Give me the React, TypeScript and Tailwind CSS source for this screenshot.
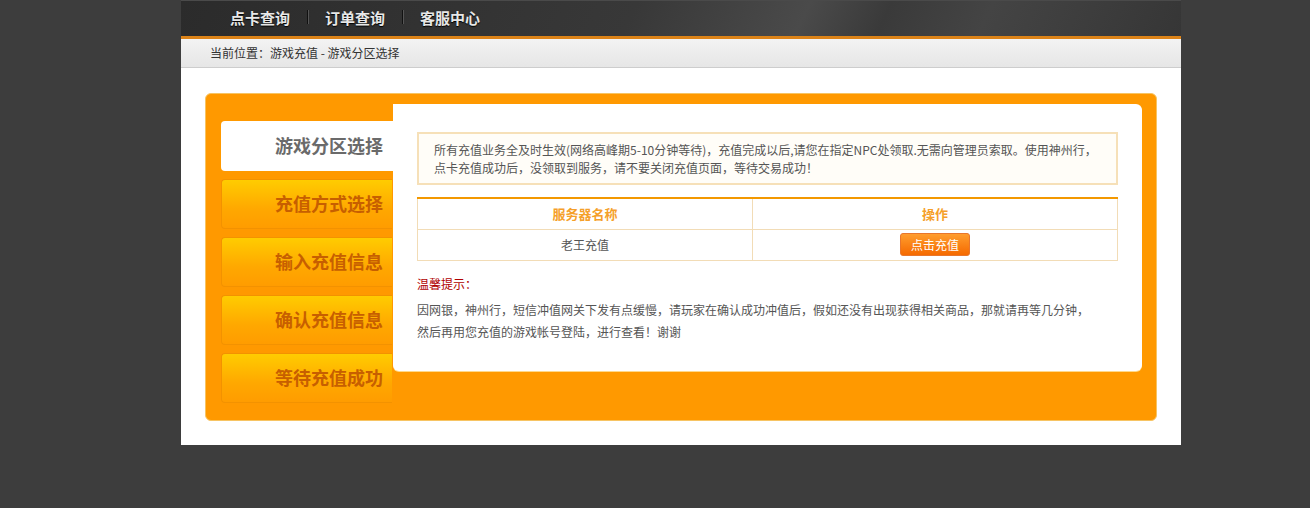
const NAV_LINKS = ["点卡查询", "订单查询", "客服中心"]
const STEPS = ["游戏分区选择", "充值方式选择", "输入充值信息", "确认充值信息", "等待充值成功"]

const FONT = "font-['Microsoft_YaHei','Noto_Sans_CJK_SC',sans-serif]"

export default function App() {
  return (
    <div className={`min-h-[508px] bg-[#3d3d3d] ${FONT}`}>
      <div className="ml-[181px] w-[1000px]">
        {/* Top nav */}
        <div className="h-[36px] bg-[linear-gradient(115deg,#2b2b2b_0%,#383838_45%,#4a4a4a_62%,#3a3a3a_70%,#444444_80%,#363636_100%)] shadow-[inset_0_1px_0_#4a4a4a]">
          <div className="flex items-center h-full pl-[49px] pb-[2px]">
            {NAV_LINKS.map((link, i) => (
              <div key={link} className="flex items-center">
                {i > 0 && <span className="mx-[17px] h-[14px] w-px bg-[#111] shadow-[1px_0_0_#555]" />}
                <a href="#" className="text-[15px] font-bold text-[#e8e8e8] leading-none [text-shadow:0_1px_1px_#000]">
                  {link}
                </a>
              </div>
            ))}
          </div>
        </div>
        <div className="h-[3px] bg-[#dc8318]" />

        {/* Breadcrumb */}
        <div className="h-[29px] flex items-center pl-[29px] text-[12px] text-[#333] bg-[linear-gradient(#f3f3f3,#e6e6e6)] border-b border-[#cdcdcd]">
          当前位置：游戏充值 - 游戏分区选择
        </div>

        {/* Main */}
        <div className="bg-white pt-[25px] pb-[24px] px-[24px]">
          <div className="h-[328px] rounded-[6px] bg-[#ff9900] border border-[#f7c463] flex pl-[15px] pt-[10px]">
            {/* Steps */}
            <div className="w-[172px] pt-[17px] flex flex-col gap-[8px]">
              {STEPS.map((step, i) =>
                i === 0 ? (
                  <div
                    key={step}
                    className="h-[50px] bg-white rounded-l-[4px] flex items-center justify-end pr-[10px] pb-[2px] text-[18px] font-bold text-[#6a6a6a]"
                  >
                    {step}
                  </div>
                ) : (
                  <div
                    key={step}
                    className="h-[50px] mr-px rounded-l-[4px] border border-r-0 border-[#f39200] bg-[linear-gradient(#ffcc00,#ffa800_60%,#ff9c00)] flex items-center justify-end pr-[9px] pb-[2px] text-[18px] font-bold text-[#c75f00]"
                  >
                    {step}
                  </div>
                )
              )}
            </div>

            {/* Panel */}
            <div className="w-[749px] h-[267px] bg-white rounded-[6px] rounded-tl-none px-[24px] pt-[28px] shadow-[0_1px_0_#ffd98a]">
              <div className="h-[53px] border-2 border-[#f6e0b8] bg-[#fffdf8] pl-[15px] pt-[7px] text-[12px] leading-[18px] text-[#555]">
                所有充值业务全及时生效(网络高峰期5-10分钟等待)，充值完成以后,请您在指定NPC处领取.无需向管理员索取。使用神州行，
                <br />
                点卡充值成功后，没领取到服务，请不要关闭充值页面，等待交易成功！
              </div>

              <table className="mt-[12px] w-full border-collapse border-t-2 border-t-[#f39800] text-[12px]">
                <tbody>
                  <tr className="h-[31px]">
                    <th className="w-[335px] border border-t-0 border-[#f2dcb6] text-[13px] font-bold text-[#f5a02a]">服务器名称</th>
                    <th className="border border-t-0 border-[#f2dcb6] text-[13px] font-bold text-[#f5a02a]">操作</th>
                  </tr>
                  <tr className="h-[31px]">
                    <td className="border border-[#f2dcb6] text-center text-[#555]">老王充值</td>
                    <td className="border border-[#f2dcb6] text-center">
                      <button className="w-[70px] h-[23px] rounded-[3px] border border-[#e8762c] bg-[linear-gradient(#ff9d2e,#f56a00)] text-[12px] text-white">
                        点击充值
                      </button>
                    </td>
                  </tr>
                </tbody>
              </table>

              <div className="mt-[14px] text-[12px] text-[#b00000] leading-[18px]">温馨提示：</div>
              <p className="mt-[6px] text-[12px] leading-[22px] text-[#555]">
                因网银，神州行，短信冲值网关下发有点缓慢，请玩家在确认成功冲值后，假如还没有出现获得相关商品，那就请再等几分钟，
                <br />
                然后再用您充值的游戏帐号登陆，进行查看！谢谢
              </p>
            </div>
          </div>
        </div>
      </div>
    </div>
  )
}
